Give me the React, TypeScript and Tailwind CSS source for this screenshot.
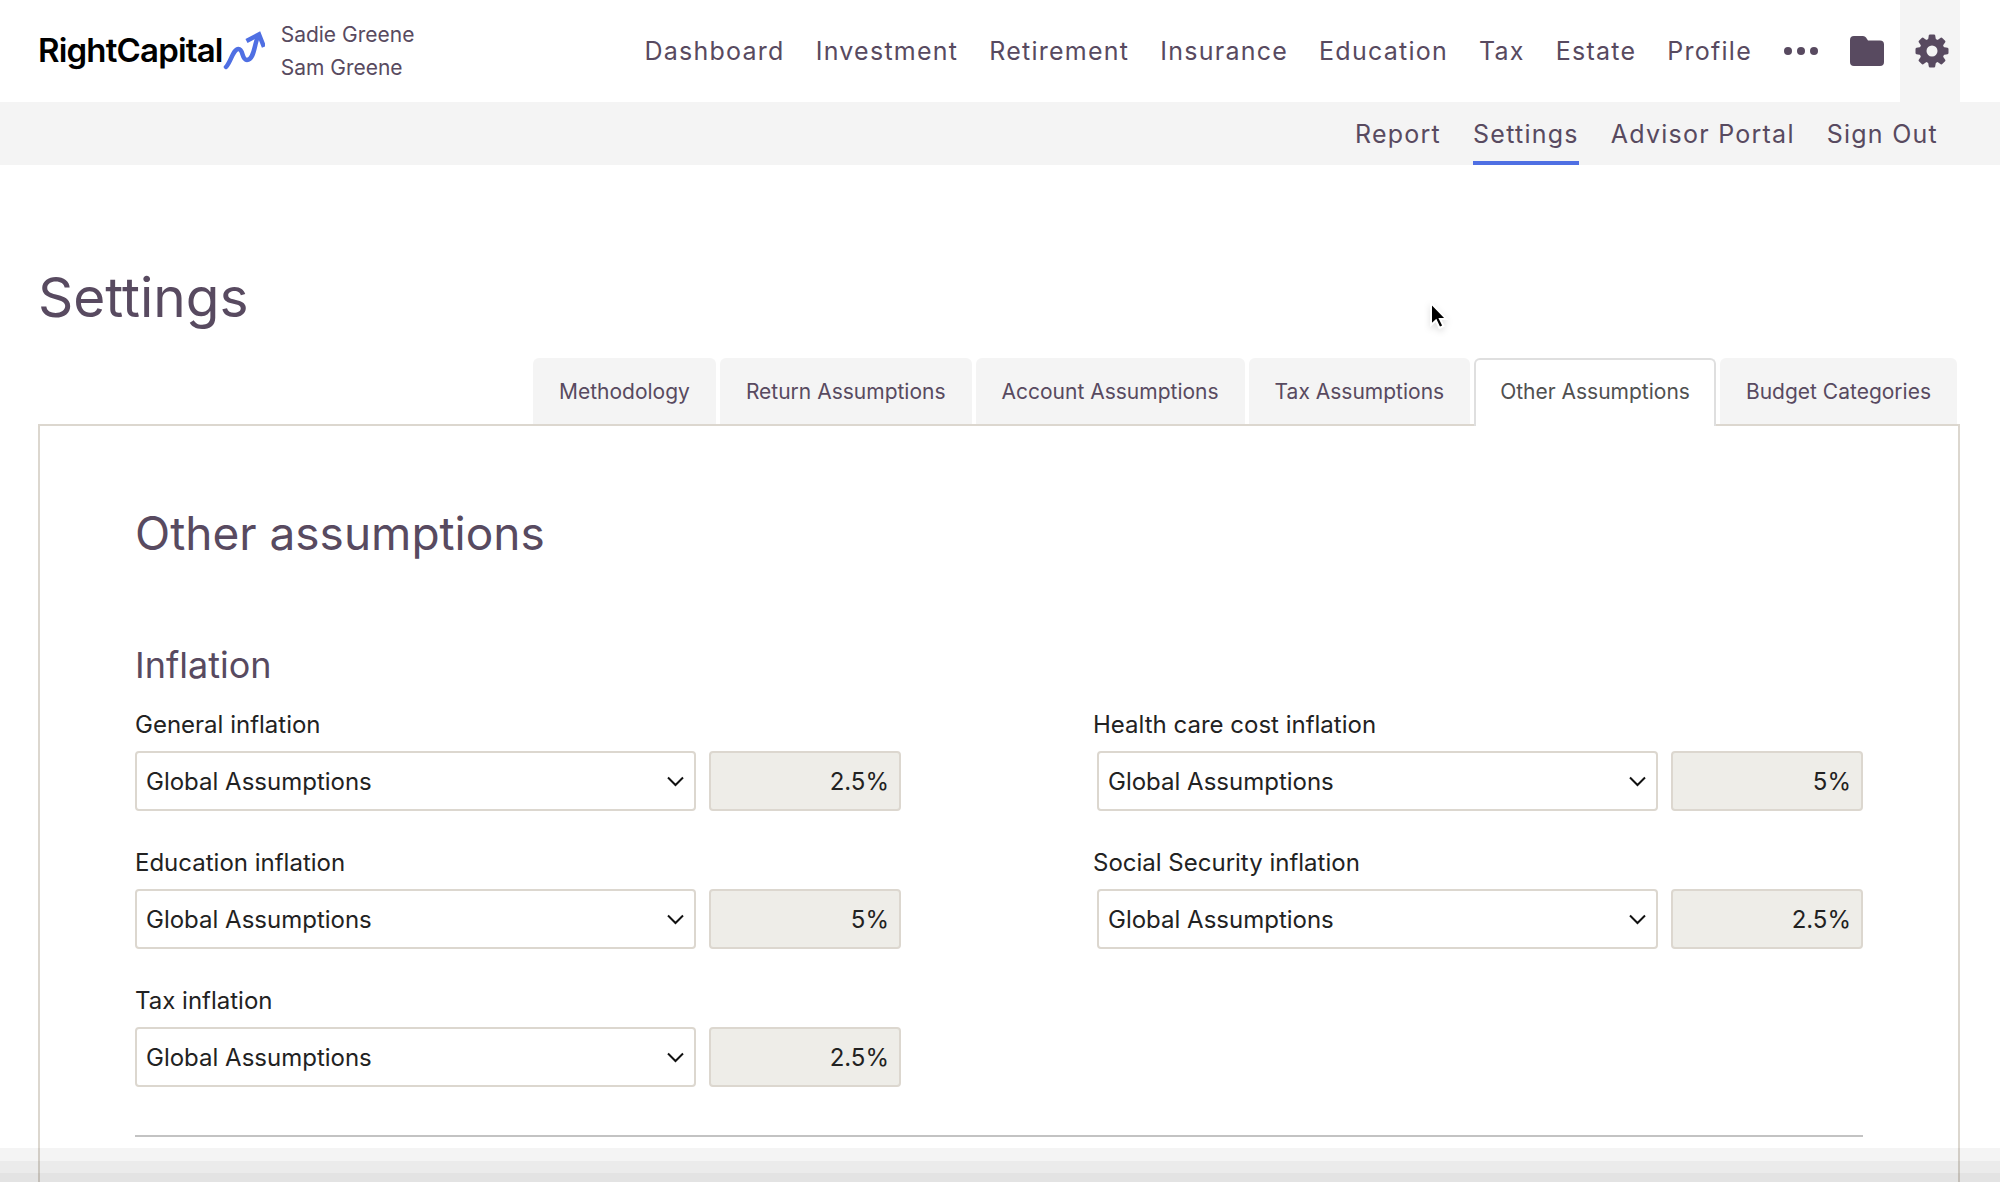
const mainLinks: string[] = [
    "Dashboard",
    "Investment",
    "Retirement",
    "Insurance",
    "Education",
    "Tax",
    "Estate",
    "Profile",
];

const subLinks: string[] = ["Report", "Settings", "Advisor Portal", "Sign Out"];

const tabs: string[] = [
    "Methodology",
    "Return Assumptions",
    "Account Assumptions",
    "Tax Assumptions",
    "Other Assumptions",
    "Budget Categories",
];

const leftFields = [
    { id: "general", label: "General inflation", value: "2.5%" },
    { id: "education", label: "Education inflation", value: "5%" },
    { id: "tax", label: "Tax inflation", value: "2.5%" },
];

const rightFields = [
    { id: "health", label: "Health care cost inflation", value: "5%" },
    { id: "social", label: "Social Security inflation", value: "2.5%" },
];

function Logo() {
    return (
        <a href="#" className="flex items-center text-black">
            <span className="text-[33px] font-semibold tracking-tight">
                RightCapital
            </span>
            <svg
                className="w-[42px] h-[40px]"
                viewBox="0 0 42 40"
                fill="none"
                stroke="#4f6fe3"
                strokeWidth="4.5"
            >
                <path
                    d="M3 36 C8 31 10 18 15.5 18 C20.5 18 18.5 29 24 29 C31 29 31 15 35 5"
                    strokeLinecap="round"
                />
                <path d="M23.5 10 L36 3.5 L41 16" />
            </svg>
        </a>
    );
}

function GearIcon() {
    return (
        <svg className="w-[34px] h-[34px]" viewBox="0 0 34 34">
            <g fill="#584a60">
                {[0, 45, 90, 135].map((angle) => (
                    <path
                        key={angle}
                        d="M15 0.5 H19 Q20 0.5 20.2 1.5 L21 6 V28 L20.2 32.5 Q20 33.5 19 33.5 H15 Q14 33.5 13.8 32.5 L13 28 V6 L13.8 1.5 Q14 0.5 15 0.5 Z"
                        transform={`rotate(${angle} 17 17)`}
                    />
                ))}
                <circle cx="17" cy="17" r="12.5" />
            </g>
            <circle cx="17" cy="17" r="5.5" fill="#f4f4f4" />
        </svg>
    );
}

function Field({ id, label, value }: { id: string; label: string; value: string }) {
    return (
        <div className="mb-[38px]">
            <label htmlFor={id} className="block h-[40px] text-2xl leading-[28px] text-[#222]">
                {label}
            </label>
            <div className="flex gap-[13px] group-last:pl-1">
                <div className="relative flex-1">
                    <select
                        id={id}
                        className="w-full h-[60px] appearance-none rounded-sm border-2 border-[#dcd7cf] bg-white pt-[2px] pl-[9px] pr-12 text-2xl text-[#222]"
                    >
                        <option>Global Assumptions</option>
                        <option>Custom</option>
                    </select>
                    <svg
                        className="pointer-events-none absolute right-3 top-1/2 -translate-y-1/2 w-[17px] h-[12px]"
                        viewBox="0 0 17 12"
                        fill="none"
                        stroke="#111"
                        strokeWidth="2"
                    >
                        <path d="M1 2.5 L8.5 10 L16 2.5" />
                    </svg>
                </div>
                <input
                    aria-label={`${label} rate`}
                    className="w-48 h-[60px] rounded-sm border-2 border-[#dcd7cf] bg-[#eeede8] px-[10px] text-right text-2xl text-[#222]"
                    value={value}
                    readOnly
                />
            </div>
        </div>
    );
}

export default function App() {
    return (
        <div className="relative flex min-h-screen flex-col bg-white font-['Inter',sans-serif] text-[#584a60]">
            <header>
                <div className="flex h-[102px] items-center justify-between pl-[38px] pr-10">
                    <div className="flex items-center gap-4">
                        <Logo />
                        <div className="text-[21px] leading-[33px]">
                            <p>Sadie Greene</p>
                            <p>Sam Greene</p>
                        </div>
                    </div>
                    <nav className="flex h-full items-center gap-[31px] text-[25px] tracking-wider">
                        {mainLinks.map((link) => (
                            <a href="#" key={link} className="pt-[2px]">
                                {link}
                            </a>
                        ))}
                        <button type="button" aria-label="More">
                            <svg className="w-[36px] h-[10px]" viewBox="0 0 36 10" fill="#584a60">
                                <circle cx="5" cy="5" r="4" />
                                <circle cx="18" cy="5" r="4" />
                                <circle cx="31" cy="5" r="4" />
                            </svg>
                        </button>
                        <div className="flex h-full items-center gap-4">
                            <button type="button" aria-label="Documents">
                                <svg className="w-[34px] h-[30px]" viewBox="0 0 34 30" fill="#584a60">
                                    <path d="M4 0 H13 Q15 0 16 1.5 L18 4.5 H30 Q34 4.5 34 8.5 V26 Q34 30 30 30 H4 Q0 30 0 26 V4 Q0 0 4 0 Z" />
                                </svg>
                            </button>
                            <button
                                type="button"
                                aria-label="Settings"
                                className="flex h-full w-[60px] items-center justify-center bg-[#f4f4f4] pl-1"
                            >
                                <GearIcon />
                            </button>
                        </div>
                    </nav>
                </div>
                <nav className="flex h-[63px] justify-end gap-8 bg-[#f4f4f4] pr-[62px] text-[25px] tracking-wider">
                    {subLinks.map((link) => (
                        <a
                            href="#"
                            key={link}
                            className={
                                link === "Settings"
                                    ? "flex items-center border-b-4 border-[#4f6fe3] pt-[6px]"
                                    : "flex items-center border-b-4 border-transparent pt-[6px]"
                            }
                        >
                            {link}
                        </a>
                    ))}
                </nav>
            </header>

            <main className="flex flex-1 flex-col pl-[38px] pr-10">
                <h1 className="mt-[96px] text-[55px] leading-[72px]">Settings</h1>
                <div className="mt-[25px] flex justify-end gap-1 pr-[3px]" role="tablist">
                    {tabs.map((tab) => (
                        <button
                            key={tab}
                            type="button"
                            role="tab"
                            aria-selected={tab === "Other Assumptions"}
                            className={
                                tab === "Other Assumptions"
                                    ? "relative z-10 -mb-[2px] h-[68px] rounded-t-md border-2 border-b-0 border-[#dfdfdf] bg-white px-6 pb-[2px] text-[21px] text-[#505050]"
                                    : "h-[66px] rounded-t-md bg-[#f4f4f4] px-[26px] pt-[2px] text-[21px]"
                            }
                        >
                            {tab}
                        </button>
                    ))}
                </div>
                <section className="flex-1 border-2 border-b-0 border-[#dcd7cf] px-[95px]">
                    <h2 className="mt-[75px] text-[46px] leading-[64px]">Other assumptions</h2>
                    <h3 className="mt-[78px] text-4xl leading-[44px]">Inflation</h3>
                    <div className="mt-6 grid grid-cols-[766fr_770fr] gap-x-[192px]">
                        <div className="group">
                            {leftFields.map((field) => (
                                <Field key={field.id} {...field} />
                            ))}
                        </div>
                        <div className="group">
                            {rightFields.map((field) => (
                                <Field key={field.id} {...field} />
                            ))}
                        </div>
                    </div>
                    <hr className="mt-[10px] border-t-2 border-[#c3c3c3]" />
                </section>
            </main>

            {/* stepped shade along the bottom edge */}
            <div className="pointer-events-none fixed inset-x-0 bottom-0 mix-blend-multiply">
                <div className="h-[13px] bg-[#f4f4f4]" />
                <div className="h-[12px] bg-[#ebebeb]" />
                <div className="h-[9px] bg-[#e3e3e3]" />
            </div>

            <svg
                className="absolute left-[1428px] top-[300px] w-[22px] h-[32px] drop-shadow-md"
                viewBox="0 0 22 32"
            >
                <path
                    d="M3 3 V25 L8 20.5 L11.5 28 L15.5 26 L12 19 H18.5 Z"
                    fill="#000"
                    stroke="#fff"
                    strokeWidth="2"
                />
            </svg>
        </div>
    );
}
